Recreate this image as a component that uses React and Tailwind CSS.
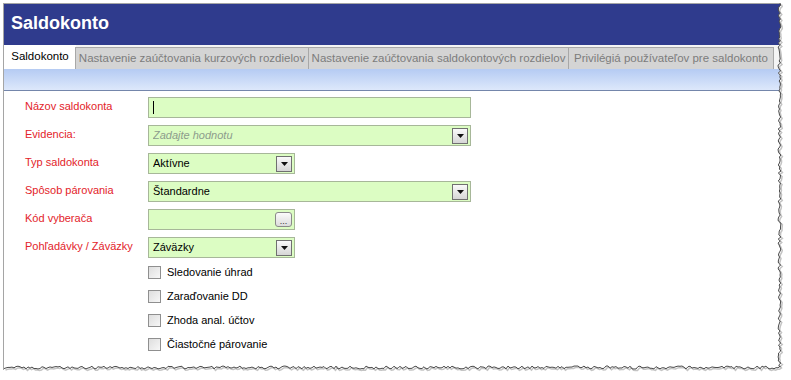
const tabs = [
  { label: 'Saldokonto', w: 'w-[72px]', active: true },
  { label: 'Nastavenie zaúčtovania kurzových rozdielov', w: 'w-[234px]' },
  { label: 'Nastavenie zaúčtovania saldokontových rozdielov', w: 'w-[261px]' },
  { label: 'Privilégiá používateľov pre saldokonto', w: 'w-[206px]' },
]

const checks = ['Sledovanie úhrad', 'Zaraďovanie DD', 'Zhoda anal. účtov', 'Čiastočné párovanie']

// torn paper edge (right + bottom), deterministic jitter
function tornEdge() {
  let s = 11
  const r = () => {
    s = (s * 9301 + 49297) % 233280
    return s / 233280
  }
  const pts = []
  for (let y = 3; y <= 368; y += 2) pts.push([779.5 + r() * 3 - 1.5, y])
  for (let x = 780; x >= 3; x -= 2) pts.push([x, 367.5 + r() * 3 - 1.5])
  return pts
}

const edge = tornEdge()
const edgeLine = edge.map((p) => p.join(',')).join(' ')
const shadowLine = edge.map(([x, y]) => `${x + 1.5},${y + 1.5}`).join(' ')
const fillPoly = edgeLine + ' 3,380 791,380 791,3'

function DropBtn() {
  return (
    <div className="w-[16px] h-[16px] border border-[#707070] bg-gradient-to-b from-[#fafafa] to-[#d6d6d6] flex items-center justify-center">
      <svg width="7" height="4" viewBox="0 0 7 4">
        <path d="M0 0h7L3.5 4z" fill="#111" />
      </svg>
    </div>
  )
}

function Field({ w, children, drop, dots }) {
  return (
    <div className={`${w} h-[21px] border border-[#a7b799] bg-[#dcfdc3] flex items-center pl-[4px] pr-[2px]`}>
      <div className="flex-1 flex items-center overflow-hidden">{children}</div>
      {drop && <DropBtn />}
      {dots && (
        <div className="w-[17px] h-[15px] rounded-[3px] border border-[#8a8a8a] bg-gradient-to-b from-[#fbfbfb] to-[#dcdcdc] text-[9px] leading-[10px] text-[#333] flex items-end justify-center">
          ...
        </div>
      )}
    </div>
  )
}

const rows = [
  { label: 'Názov saldokonta', w: 'w-[323px]', el: <span className="w-px h-[13px] bg-black" /> },
  { label: 'Evidencia:', w: 'w-[323px]', drop: true, el: <span className="italic text-[#8c9c8c]">Zadajte hodnotu</span> },
  { label: 'Typ saldokonta', w: 'w-[147px]', drop: true, el: <span>Aktívne</span> },
  { label: 'Spôsob párovania', w: 'w-[323px]', drop: true, el: <span>Štandardne</span> },
  { label: 'Kód vyberača', w: 'w-[147px]', dots: true, el: null },
  { label: 'Pohľadávky / Záväzky', w: 'w-[147px]', drop: true, el: <span>Záväzky</span> },
]

export default function App() {
  return (
    <div className="w-[791px] h-[380px] bg-white relative overflow-hidden font-['Liberation_Sans',Arial,sans-serif] text-[11px] text-black">
      <div className="ml-[3px] mt-[3px] w-[779px] h-[367px] border-l border-t border-[#a5a5a5] flex flex-col overflow-hidden">
        {/* title bar */}
        <div className="h-[41px] bg-[#2f3b8d] flex items-center pl-[7px] pb-[2px] text-white font-bold text-[18px]">
          Saldokonto
        </div>

        {/* tabs */}
        <div className="h-[24px] bg-[#f4f4f4] flex items-end whitespace-nowrap text-[11.5px]">
          {tabs.map((t) =>
            t.active ? (
              <div key={t.label} className={`${t.w} h-[24px] bg-white flex items-center justify-center pb-[1px]`}>
                {t.label}
              </div>
            ) : (
              <div
                key={t.label}
                className={`${t.w} h-[22px] bg-[#d4d4d4] border border-[#a8a8a8] border-b-0 -ml-px first:ml-0 flex items-center justify-center text-[#7c7c7c]`}
              >
                {t.label}
              </div>
            )
          )}
        </div>

        {/* gradient strip */}
        <div className="h-[22px] bg-gradient-to-b from-[#b5cbf3] to-[#dde8fb] border-b border-[#7486ab]" />

        {/* form */}
        <div className="pt-[6px] pl-[21px] flex flex-col">
          <div className="grid grid-cols-[123px_auto] gap-y-[7px] items-center justify-start">
            {rows.map((r) => (
              <div key={r.label} className="contents">
                <span className="text-[#e3232a] whitespace-nowrap -mt-[2px]">{r.label}</span>
                <Field w={r.w} drop={r.drop} dots={r.dots}>
                  {r.el}
                </Field>
              </div>
            ))}
          </div>

          <div className="ml-[123px] mt-[2px] flex flex-col">
            {checks.map((c) => (
              <div key={c} className="h-[24px] flex items-center gap-[6px]">
                <span className="w-[13px] h-[13px] border border-[#8f8f8f] bg-gradient-to-br from-[#dedede] to-[#f7f7f7]" />
                <span>{c}</span>
              </div>
            ))}
          </div>
        </div>
      </div>

      {/* torn edge */}
      <svg className="absolute inset-0 pointer-events-none" width="791" height="380" viewBox="0 0 791 380">
        <polygon points={fillPoly} fill="#fff" />
        <polyline points={shadowLine} fill="none" stroke="#c4c4c4" strokeWidth="1.5" />
        <polyline points={edgeLine} fill="none" stroke="#4a4a4a" strokeWidth="1" />
      </svg>
    </div>
  )
}
